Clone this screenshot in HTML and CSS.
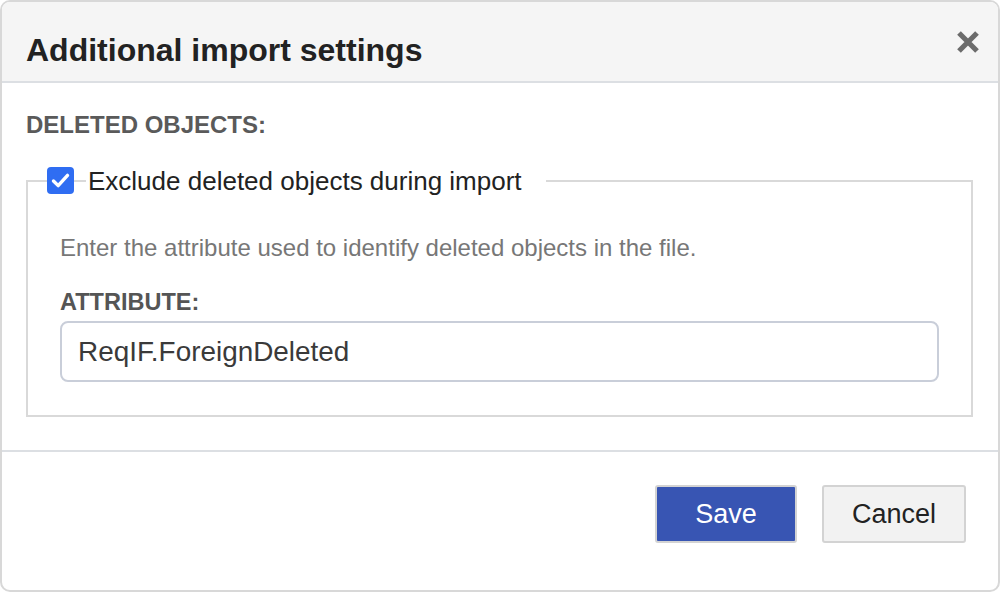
FILE: index.html
```html
<!DOCTYPE html>
<html lang="en">
<head>
<meta charset="utf-8">
<title>Additional import settings</title>
<link rel="stylesheet" href="styles.css">
</head>
<body>
<div class="dialog">
  <div class="dialog-header">
    <h1 class="dialog-title">Additional import settings</h1>
    <button class="close-btn" aria-label="Close">
      <svg width="24" height="24" viewBox="0 0 24 24"><path d="M3 3 L21 21 M21 3 L3 21" stroke="#6b6b6b" stroke-width="5.2" fill="none"/></svg>
    </button>
  </div>
  <div class="dialog-body">
    <div class="section-label">DELETED OBJECTS:</div>
    <fieldset class="group">
      <legend class="group-legend">
        <span class="checkbox">
          <svg width="27" height="27" viewBox="0 0 27 27"><path d="M6.5 14 L11.2 18.6 L20.5 8.4" stroke="#fff" stroke-width="3.4" fill="none" stroke-linecap="round" stroke-linejoin="round"/></svg>
        </span>
        Exclude deleted objects during import
      </legend>
      <p class="hint">Enter the attribute used to identify deleted objects in the file.</p>
      <div class="field-label">ATTRIBUTE:</div>
      <div class="text-input">ReqIF.ForeignDeleted</div>
    </fieldset>
  </div>
  <div class="dialog-footer">
    <button class="btn btn-primary">Save</button>
    <button class="btn btn-secondary">Cancel</button>
  </div>
</div>
</body>
</html>
```

FILE: styles.css
```css
html, body {
  margin: 0;
  padding: 0;
  background: #ffffff;
}

body {
  font-family: "Liberation Sans", Arial, sans-serif;
}

.dialog {
  box-sizing: border-box;
  width: 1000px;
  height: 592px;
  border: 2px solid #d8d8d8;
  border-radius: 10px;
  overflow: hidden;
  display: flex;
  flex-direction: column;
  background: #fff;
}

.dialog-header {
  box-sizing: border-box;
  height: 81px;
  flex: none;
  background: #f5f5f5;
  border-bottom: 2px solid #dcdfe3;
  display: flex;
  justify-content: space-between;
  align-items: flex-start;
  padding: 0 18px 0 24px;
}

.dialog-title {
  margin: 0;
  padding-top: 29px;
  font-size: 32px;
  line-height: 38px;
  font-weight: bold;
  color: #222;
}

.close-btn {
  align-self: center;
  border: 0;
  background: transparent;
  padding: 0;
  width: 24px;
  height: 24px;
  display: flex;
  cursor: pointer;
}

.dialog-body {
  flex: none;
  padding: 28px 25px 33px 24px;
  border-bottom: 2px solid #dcdfe3;
}

.section-label {
  font-size: 24px;
  line-height: 28px;
  font-weight: bold;
  color: #5a5a5a;
}

.group {
  margin: 27px 0 0 0;
  border: 2px solid #d9d9d9;
  padding: 0 32px 33px 32px;
}

.group-legend {
  position: relative;
  margin-left: 26px;
  padding: 0 24px 0 2px;
  font-size: 26px;
  line-height: 30px;
  color: #222;
}

.checkbox {
  position: absolute;
  left: -39px;
  top: 1px;
  width: 27px;
  height: 27px;
  border-radius: 4px;
  background: #2f6df2;
  display: flex;
}

.hint {
  margin: 38px 0 0 0;
  font-size: 24px;
  line-height: 28px;
  color: #777;
}

.field-label {
  margin-top: 26px;
  font-size: 23.5px;
  line-height: 28px;
  font-weight: bold;
  color: #555;
}

.text-input {
  box-sizing: border-box;
  margin-top: 5px;
  height: 61px;
  border: 2px solid #c9ced9;
  border-radius: 8px;
  padding: 0 16px;
  display: flex;
  align-items: center;
  font-size: 27.9px;
  color: #3a3a3a;
}

.dialog-footer {
  flex: 1;
  display: flex;
  justify-content: flex-end;
  align-items: flex-start;
  gap: 25px;
  padding: 33px 32px 0 0;
}

.btn {
  box-sizing: border-box;
  height: 58px;
  border-radius: 3px;
  border: 2px solid #d3d3d3;
  font-family: "Liberation Sans", Arial, sans-serif;
  font-size: 27px;
  padding: 0;
  cursor: pointer;
}

.btn-primary {
  width: 142px;
  background: #3855b3;
  color: #fff;
}

.btn-secondary {
  width: 144px;
  background: #f2f2f2;
  color: #222;
}
```
